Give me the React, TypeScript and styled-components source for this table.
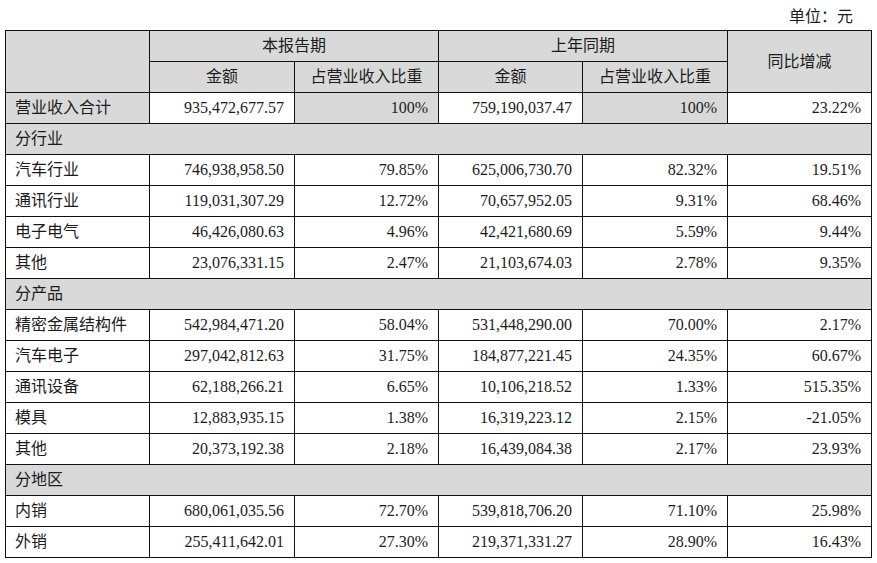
import React from "react";
import styled, { createGlobalStyle } from "styled-components";

const Global = createGlobalStyle`
  html, body { margin: 0; padding: 0; background: #ffffff; }
  body { font-family: "Liberation Serif", "Noto Sans CJK SC", serif; color: #1c1c1c; }
`;

const Page = styled.div`
  width: 877px;
  height: 563px;
  padding-left: 5px;
  box-sizing: border-box;
`;

const Unit = styled.div`
  height: 30px;
  box-sizing: border-box;
  padding: 8px 24px 0 0;
  text-align: right;
  font-size: 16px;
  line-height: 18px;
`;

const Table = styled.table`
  border-collapse: collapse;
  table-layout: fixed;
  width: 866px;
  font-size: 16px;
`;

const Th = styled.th`
  border: 1px solid #111;
  background: #d9d9d9;
  font-weight: normal;
  text-align: center;
  height: 30px;
  padding: 0;
  line-height: 18px;
`;

const Td = styled.td<{ $gray?: boolean; $left?: boolean }>`
  border: 1px solid #111;
  background: ${(p) => (p.$gray ? "#d9d9d9" : "#ffffff")};
  text-align: ${(p) => (p.$left ? "left" : "right")};
  height: 30px;
  padding: 0 10px 0 9px;
  line-height: 18px;
  white-space: nowrap;
`;

type Row = [string, string, string, string, string, string];
type Section = { title: string; rows: Row[] };

const sections: Section[] = [
  {
    title: "分行业",
    rows: [
      ["汽车行业", "746,938,958.50", "79.85%", "625,006,730.70", "82.32%", "19.51%"],
      ["通讯行业", "119,031,307.29", "12.72%", "70,657,952.05", "9.31%", "68.46%"],
      ["电子电气", "46,426,080.63", "4.96%", "42,421,680.69", "5.59%", "9.44%"],
      ["其他", "23,076,331.15", "2.47%", "21,103,674.03", "2.78%", "9.35%"],
    ],
  },
  {
    title: "分产品",
    rows: [
      ["精密金属结构件", "542,984,471.20", "58.04%", "531,448,290.00", "70.00%", "2.17%"],
      ["汽车电子", "297,042,812.63", "31.75%", "184,877,221.45", "24.35%", "60.67%"],
      ["通讯设备", "62,188,266.21", "6.65%", "10,106,218.52", "1.33%", "515.35%"],
      ["模具", "12,883,935.15", "1.38%", "16,319,223.12", "2.15%", "-21.05%"],
      ["其他", "20,373,192.38", "2.18%", "16,439,084.38", "2.17%", "23.93%"],
    ],
  },
  {
    title: "分地区",
    rows: [
      ["内销", "680,061,035.56", "72.70%", "539,818,706.20", "71.10%", "25.98%"],
      ["外销", "255,411,642.01", "27.30%", "219,371,331.27", "28.90%", "16.43%"],
    ],
  },
];

export default function App() {
  return (
    <Page>
      <Global />
      <Unit>单位：元</Unit>
      <Table>
        <colgroup>
          <col style={{ width: 144 }} />
          <col style={{ width: 145 }} />
          <col style={{ width: 144 }} />
          <col style={{ width: 144 }} />
          <col style={{ width: 145 }} />
          <col style={{ width: 144 }} />
        </colgroup>
        <thead>
          <tr>
            <Th rowSpan={2} />
            <Th colSpan={2}>本报告期</Th>
            <Th colSpan={2}>上年同期</Th>
            <Th rowSpan={2}>同比增减</Th>
          </tr>
          <tr>
            <Th>金额</Th>
            <Th>占营业收入比重</Th>
            <Th>金额</Th>
            <Th>占营业收入比重</Th>
          </tr>
        </thead>
        <tbody>
          <tr>
            <Td $gray $left>营业收入合计</Td>
            <Td>935,472,677.57</Td>
            <Td $gray>100%</Td>
            <Td>759,190,037.47</Td>
            <Td $gray>100%</Td>
            <Td>23.22%</Td>
          </tr>
          {sections.map((s) => (
            <React.Fragment key={s.title}>
              <tr>
                <Td $gray $left colSpan={6}>{s.title}</Td>
              </tr>
              {s.rows.map((r) => (
                <tr key={s.title + r[0]}>
                  <Td $left>{r[0]}</Td>
                  <Td>{r[1]}</Td>
                  <Td>{r[2]}</Td>
                  <Td>{r[3]}</Td>
                  <Td>{r[4]}</Td>
                  <Td>{r[5]}</Td>
                </tr>
              ))}
            </React.Fragment>
          ))}
        </tbody>
      </Table>
    </Page>
  );
}
